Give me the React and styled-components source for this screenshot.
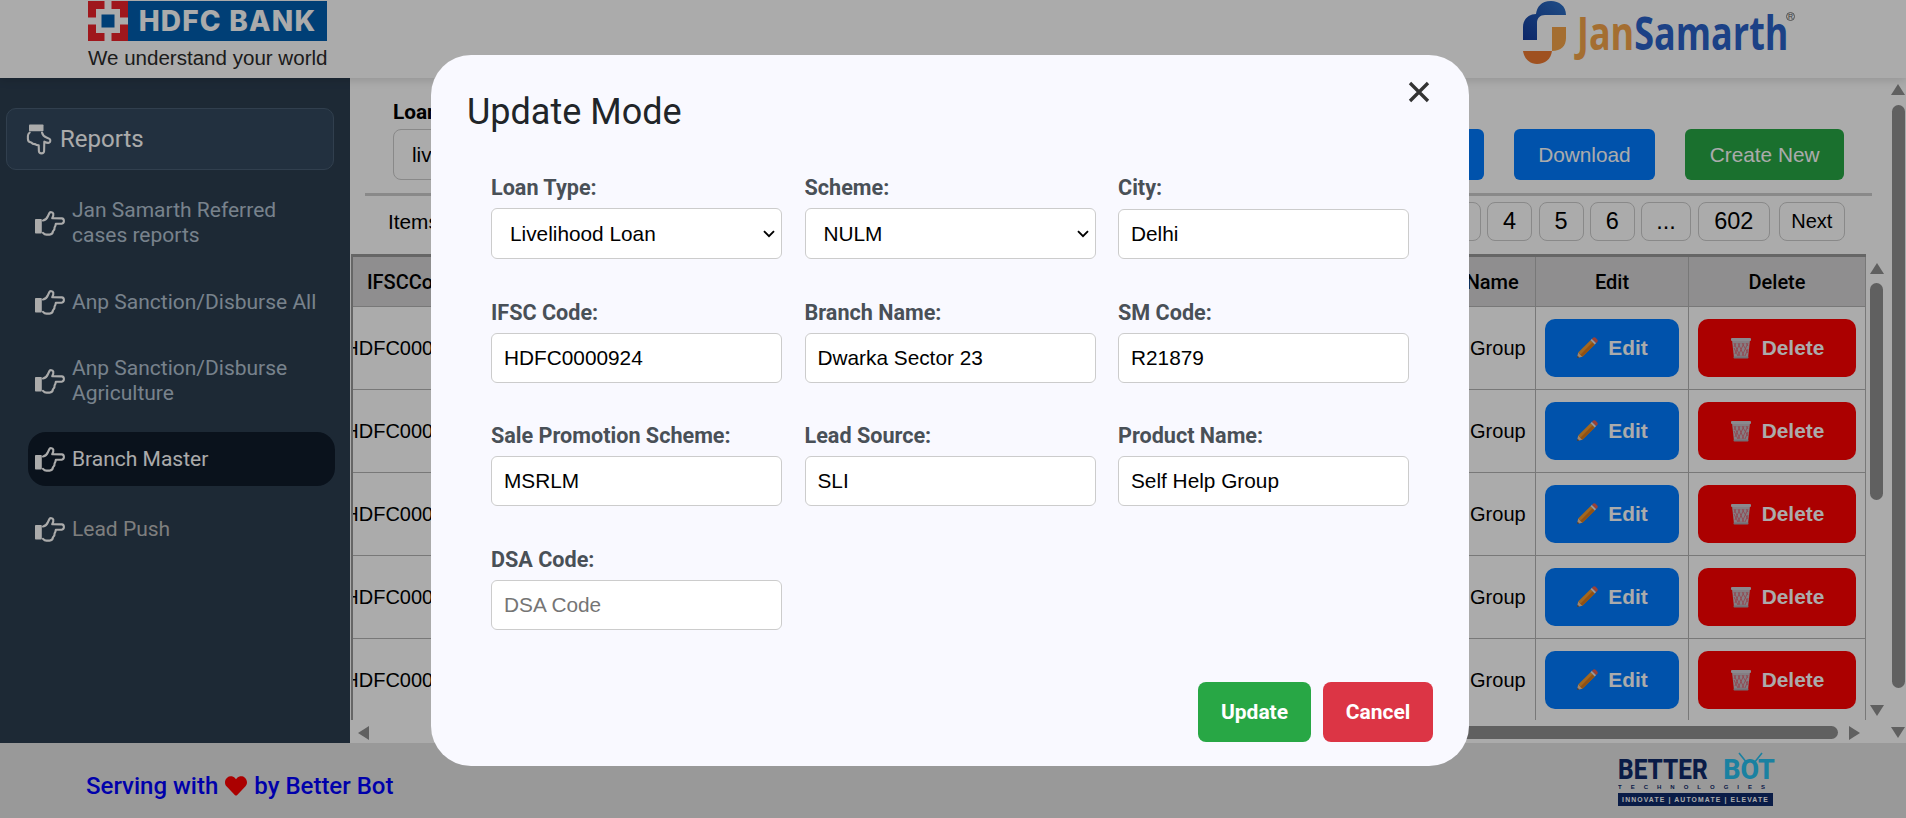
import React from "react";
import styled, { createGlobalStyle } from "styled-components";
import { FaHeart } from "react-icons/fa";

const Global = createGlobalStyle`
  html, body { margin: 0; padding: 0; height: 100%; overflow: hidden; background: #fff; }
  * { box-sizing: border-box; }
  body { font-family: Roboto, "Liberation Sans", sans-serif; }
`;
const Page = styled.div`height: 818px; display: flex; flex-direction: column; overflow: hidden;`;

const Header = styled.header`
  height: 78px; flex: none; background: #fff; display: flex; justify-content: space-between;
  padding: 1px 121px 0 88px; box-shadow: 0 3px 8px rgba(0,0,0,.12); position: relative; z-index: 1;
`;
const HdfcLogo = styled.div`width: 239px; display: flex; flex-direction: column;`;
const HdfcBand = styled.div`height: 40px; display: flex; background: #005fb0;`;
const HdfcMark = styled.svg`width: 40px; height: 40px; flex: none;`;
const HdfcName = styled.div`
  flex: 1; display: flex; align-items: center; justify-content: center; color: #fff;
  font: 800 28px Inter, "Liberation Sans", sans-serif; letter-spacing: 1.2px; white-space: nowrap;
`;
const HdfcTag = styled.div`
  font: 400 20.55px/24px "Liberation Sans", sans-serif; color: #2a2a2a; margin-top: 5px; white-space: nowrap;
`;
const JanLogo = styled.div`display: flex; align-items: flex-start; gap: 11px; position: relative;`;
const JanMark = styled.svg`width: 43px; height: 64px; flex: none;`;
const JanWord = styled.div`
  font: 700 47px/56px "Open Sans", sans-serif; white-space: nowrap; color: #2a62c8;
  transform: scaleX(.765); transform-origin: left top; width: 208px; margin-top: 3px;
`;
const JanOrange = styled.span`color: #f5a54a;`;
const Reg = styled.span`
  position: absolute; right: -10px; top: 11px; width: 9px; height: 9px; border: 1px solid #777;
  border-radius: 50%; font: 7px/7px "Liberation Sans", sans-serif; text-align: center; color: #555;
`;

const Body = styled.div`flex: 1; display: flex; min-height: 0;`;
const Sidebar = styled.aside`
  width: 350px; flex: none; background: #2c3e50; padding: 30px 15px 0 6px; display: flex; flex-direction: column;
`;
const ReportsBox = styled.div`
  height: 62px; display: flex; align-items: center; gap: 6px; padding-left: 17px; width: 328px;
  background: #33485e; border: 1px solid #4a5f75; border-radius: 10px; color: #fff; font-size: 24px;
`;
const NavList = styled.nav`display: flex; flex-direction: column; margin-top: 28px; padding-left: 22px;`;
const NavItem = styled.div`
  display: flex; align-items: center; gap: 7px; padding: 0 7px; width: 307px; font-size: 21px; line-height: 25px;
  height: ${(p) => p.$h}px; margin-bottom: ${(p) => p.$mb}px;
  color: ${(p) => (p.$active ? "#fff" : p.$muted ? "#bdbdbd" : "#b3c2d1")};
  background: ${(p) => (p.$active ? "#0f1b2a" : "transparent")};
  border-radius: 18px;
`;
const HandSvg = styled.svg`
  width: 30px; height: 25px; flex: none; color: #fff; overflow: visible;
  transform: ${(p) => (p.$down ? "rotate(90deg)" : "none")};
`;
const Hand = ({ down }) => (
  <HandSvg viewBox="0 0 30 25" $down={down}>
    <rect x="0" y="8" width="6.8" height="14.5" rx=".8" fill="currentColor" />
    <path
      d="M8 9.5 C10.5 9 12 7.5 13 5 L14.4 2 C15.2 .8 17.6 .8 18.3 2.6 C18.7 4 18 5.6 17.2 7.2 L26.8 7.4 C29.6 7.6 29.6 12.4 26.8 12.6 L20.8 12.8 C20.6 14.6 20.2 15.6 19.6 16.4 C19.8 18 19 19.4 18 20.2 C17.8 22.4 16.4 23.6 14.6 23.6 L11.5 23.6 C10.2 23.6 9 23 8 21.8"
      fill="none" stroke="currentColor" strokeWidth="2.1" strokeLinecap="round" strokeLinejoin="round"
    />
  </HandSvg>
);

const Main = styled.main`flex: 1; min-width: 0; display: flex; background: #fff;`;
const Content = styled.div`flex: 1; min-width: 0; display: flex; flex-direction: column;`;
const Toolbar = styled.div`
  display: flex; justify-content: space-between; align-items: flex-end; padding: 22px 46px 0 43px;
`;
const FilterGroup = styled.div`display: flex; flex-direction: column; gap: 5px;`;
const FilterLabel = styled.div`font: 700 20.8px/24px Roboto, sans-serif; color: #000;`;
const FilterInput = styled.div`
  width: 250px; height: 51px; border: 1px solid #ccc; border-radius: 8px; padding: 0 18px;
  display: flex; align-items: center; font: 400 20.8px "Liberation Sans", sans-serif;
`;
const ToolActions = styled.div`display: flex; gap: 30px;`;
const ToolButton = styled.button`
  height: 51px; padding: 0 24.5px; border: 0; border-radius: 6px; color: #fff; white-space: nowrap;
  font: 400 20.8px "Liberation Sans", sans-serif; background: ${(p) => (p.$green ? "#28a745" : "#007bff")};
`;
const Divider = styled.div`height: 3px; background: #ccc; margin: 13px 18px 0 15px;`;
const PagerRow = styled.div`
  display: flex; justify-content: space-between; align-items: center; padding: 6px 45px 0 38px; height: 45px;
`;
const PagerInfo = styled.div`font: 400 20.8px "Liberation Sans", sans-serif; color: #000;`;
const Pager = styled.div`display: flex; gap: 6.5px; align-items: center;`;
const PageBtn = styled.button`
  height: 39px; width: ${(p) => p.$w}px; background: transparent; border: 1px solid #ccc; border-radius: 8px;
  padding: 0; color: #000; margin-left: ${(p) => p.$ml || 0}px;
  font: 400 ${(p) => p.$fs || 23.5}px "Liberation Sans", sans-serif;
`;
const TableArea = styled.div`flex: 1; min-height: 0; display: flex; flex-direction: column; margin: 13px 3px 0 0;`;
const TableRow0 = styled.div`flex: 1; min-height: 0; display: flex;`;
const TableClip = styled.div`
  width: 1515px; flex: none; margin-left: 1px; overflow: hidden; border-left: 2px solid #999; border-top: 3px solid #999;
`;
const COLS = "117px 904px 162px 153px 177px";
const HeadRow = styled.div`
  display: grid; grid-template-columns: ${COLS}; height: 50px; background: #d6d4d5;
  border-bottom: 1px solid #b3b3b3;
`;
const HeadCell = styled.div`
  display: flex; align-items: center; justify-content: center; white-space: nowrap;
  border-right: 1px solid #b3b3b3; font: 500 20px Roboto, sans-serif; color: #000;
`;
const DataRow = styled.div`
  display: grid; grid-template-columns: ${COLS}; height: 83px; border-bottom: 1px solid #b3b3b3;
`;
const DataCell = styled.div`
  display: flex; align-items: center; justify-content: center; white-space: nowrap; min-width: 0;
  border-right: 1px solid #b3b3b3; font: 400 20px "Liberation Sans", sans-serif; color: #000;
`;
const ActionButton = styled.button`
  height: 58px; width: ${(p) => p.$w}px; flex: none; border: 0; border-radius: 10px; color: #fff;
  display: flex; align-items: center; justify-content: center; gap: 10px; padding: 0;
  font: 700 20.8px "Liberation Sans", sans-serif; background: ${(p) => (p.$red ? "#ff0000" : "#007bff")};
`;
const VBar = styled.div`
  flex: 1; display: flex; flex-direction: column; align-items: center; padding-top: ${(p) => p.$pt}px;
`;
const VThumb = styled.div`
  width: ${(p) => p.$w}px; height: ${(p) => p.$h}px; border-radius: 7px; background: #8f8f8f; margin-top: ${(p) => p.$mt}px; flex: none;
`;
const Arrow = styled.svg`width: 14px; height: 11px; fill: #8f8f8f; flex: none; margin-top: ${(p) => p.$mt || 0}px;`;
const HBar = styled.div`height: 23px; flex: none; display: flex; align-items: center; padding: 2px 0 0 8px;`;
const HThumb = styled.div`
  width: ${(p) => p.$w}px; height: 13px; border-radius: 7px; background: #8f8f8f; margin: 0 11px 0 auto;
`;
const HArrow = styled.svg`width: 11px; height: 14px; fill: #8f8f8f; flex: none;`;
const Corner = styled.div`width: 27px; flex: none;`;
const PageBar = styled.div`width: 16px; flex: none; display: flex; flex-direction: column; align-items: center; padding-top: 6px;`;

const Footer = styled.footer`
  height: 75px; flex: none; background: #e4e4e4; display: flex; justify-content: space-between; align-items: center;
  padding: 0 133px 0 86px;
`;
const Serving = styled.div`
  display: flex; align-items: center; gap: 7px; font: 500 24px Roboto, sans-serif; color: #0000ff; margin-top: 10px;
  svg { width: 22px; height: 22px; color: #ff0000; }
`;
const BotLogo = styled.div`width: 155px; display: flex; flex-direction: column; position: relative; margin-top: 2px;`;
const BotWord = styled.div`
  display: flex; justify-content: space-between; height: 26px; font: 800 28px/26px Roboto, sans-serif; color: #0f2a6b;
`;
const BotNavy = styled.span`transform: scaleX(.87); transform-origin: left center;`;
const BotTeal = styled.span`color: #27c0f0; transform: scaleX(.96); transform-origin: right center;`;
const Antenna = styled.svg`position: absolute; right: 9px; top: -5px; width: 28px; height: 12px;`;
const BotTech = styled.div`
  font: 700 6px/8px "Liberation Sans", sans-serif; letter-spacing: 9px; color: #0f2a6b; white-space: nowrap; overflow: hidden;
`;
const BotBand = styled.div`
  margin-top: 2px; height: 13px; background: #0f2a6b; color: #fff; display: flex; align-items: center; justify-content: center;
  font: 700 6.8px "Liberation Sans", sans-serif; letter-spacing: 1.15px; white-space: nowrap;
`;

const Overlay = styled.div`
  position: fixed; inset: 0; background: rgba(0,0,0,.33); z-index: 5; display: flex; align-items: flex-start;
  justify-content: center; padding: 55px 6px 0 0;
`;
const Modal = styled.div`
  position: relative; width: 1038px; height: 711px; background: #f9f9ff; border-radius: 40px;
  display: flex; flex-direction: column; padding: 0 36px 24px 36px;
`;
const Title = styled.h2`margin: 34px 0 0; font: 400 36px/46px Roboto, sans-serif; color: #212529;`;
const CloseBtn = styled.button`
  position: absolute; top: 25px; right: 38px; width: 24px; height: 24px; border: 0; padding: 0; background: none;
  svg { display: block; width: 24px; height: 24px; }
`;
const Form = styled.div`
  display: grid; grid-template-columns: repeat(3, 291px); column-gap: 22.5px; row-gap: 42.5px; margin: 42px 0 0 24px;
`;
const Field = styled.label`display: flex; flex-direction: column; justify-content: space-between; gap: 10px;`;
const FieldName = styled.span`font: 700 21.6px/21px Roboto, sans-serif; color: #495057; white-space: nowrap;`;
const Control = styled.input`
  height: 50px; width: 100%; border: 1px solid #ccc; border-radius: 6px; background: #fff; padding: 0 12px;
  font: 400 20.8px "Liberation Sans", sans-serif; color: #000; outline: none;
`;
const Select = styled.select`
  height: 51px; width: 100%; border: 1px solid #ccc; border-radius: 6px; padding: 0 30px 0 18px; appearance: none;
  background: #fff url("data:image/svg+xml,%3Csvg xmlns='http://www.w3.org/2000/svg' width='12' height='8' viewBox='0 0 12 8'%3E%3Cpath d='M1 1.2 L6 6.2 L11 1.2' fill='none' stroke='%23000' stroke-width='1.9'/%3E%3C/svg%3E") no-repeat right 6px center;
  font: 400 20.8px "Liberation Sans", sans-serif; color: #000; outline: none;
`;
const ModalActions = styled.div`margin-top: auto; display: flex; justify-content: flex-end; gap: 12px;`;
const ModalBtn = styled.button`
  height: 60px; width: ${(p) => p.$w}px; border: 0; border-radius: 8px; color: #fff; padding: 0;
  font: 700 21px Roboto, sans-serif; background: ${(p) => p.$bg};
`;

const Pencil = () => (
  <svg width="22" height="22" viewBox="0 0 22 22">
    <polygon points="1,21 2.2,15.6 6.4,19.8" fill="#f6c79a" />
    <polygon points="1,21 1.5,18.7 3.3,20.5" fill="#4a4a55" />
    <polygon points="2.2,15.6 14.5,3.2 18.8,7.5 6.4,19.8" fill="#f39a2e" />
    <polygon points="4.3,17.7 16.6,5.3 18.8,7.5 6.4,19.8" fill="#d97a1e" />
    <polygon points="14.5,3.2 15.9,1.8 20.2,6.1 18.8,7.5" fill="#e8e4e0" />
    <path d="M15.9 1.8 L17.2 .7 C18 .1 18.8 .1 19.6 .8 L21.2 2.4 C21.9 3.2 21.9 4 21.3 4.9 L20.2 6.1 Z" fill="#e9604f" />
  </svg>
);
const Basket = () => (
  <svg width="22" height="22" viewBox="0 0 22 22">
    <polygon points="2,3 20,3 18,21 4,21" fill="#c6bcc4" />
    <g stroke="#e05060" strokeWidth=".9" opacity=".75">
      <path d="M4 6 L10 19 M8 6 L14 19 M12 6 L18 16 M16 6 L18 9 M4 11 L8 19 M18 6 L12 19 M14 6 L8 19 M10 6 L5 17 M6 6 L4 10 M18 12 L15 19" />
    </g>
    <rect x="1" y="1" width="20" height="3" rx="1" fill="#d0ccd4" />
    <rect x="3.5" y="19.4" width="15" height="2" rx="1" fill="#aaa4ae" />
  </svg>
);

const rows = [0, 1, 2, 3, 4];

const Field1 = ({ name, value, placeholder }) => (
  <Field>
    <FieldName>{name}</FieldName>
    <Control defaultValue={value} placeholder={placeholder} />
  </Field>
);
const Sel = ({ name, value }) => (
  <Field>
    <FieldName>{name}</FieldName>
    <Select defaultValue={value}><option>{value}</option></Select>
  </Field>
);

export default function App() {
  return (
    <Page>
      <Global />
      <Header>
        <HdfcLogo>
          <HdfcBand>
            <HdfcMark viewBox="0 0 40 40">
              <rect width="40" height="40" fill="#ed232a" />
              <rect x="8" y="8" width="24" height="24" fill="#fff" />
              <rect x="16.5" width="7" height="40" fill="#fff" />
              <rect y="16.5" width="40" height="7" fill="#fff" />
              <rect x="13.5" y="13.5" width="13" height="13" fill="#005fb0" />
            </HdfcMark>
            <HdfcName>HDFC BANK</HdfcName>
          </HdfcBand>
          <HdfcTag>We understand your world</HdfcTag>
        </HdfcLogo>
        <JanLogo>
          <JanMark viewBox="0 0 43 64">
            <defs>
              <linearGradient id="janBlue" x1="0" y1="1" x2="1" y2="0">
                <stop offset="0" stopColor="#123a9c" /><stop offset="1" stopColor="#2f74c8" />
              </linearGradient>
            </defs>
            <path d="M43 14 C43 5 36 0 28 0 C18 0 14 6 13 13 C6 13 0 18 0 26 L0 39 L14 39 L14 22 C14 17 17 14 22 14 Z" fill="url(#janBlue)" />
            <path d="M29 26 H43 V37 C43 45 38 50 29 50 Z" fill="#f5a54a" />
            <path d="M0 50 L29 50 C28 58 22 63 14 63 C6 63 1 57 0 50 Z" fill="#ee7a30" />
          </JanMark>
          <JanWord><JanOrange>Jan</JanOrange>Samarth</JanWord>
          <Reg>R</Reg>
        </JanLogo>
      </Header>
      <Body>
        <Sidebar>
          <ReportsBox><Hand down />Reports</ReportsBox>
          <NavList>
            <NavItem $h={50} $mb={42}><Hand /><span>Jan Samarth Referred<br />cases reports</span></NavItem>
            <NavItem $h={25} $mb={41}><Hand /><span>Anp Sanction/Disburse All</span></NavItem>
            <NavItem $h={50} $mb={26}><Hand /><span>Anp Sanction/Disburse<br />Agriculture</span></NavItem>
            <NavItem $h={54} $mb={16} $active><Hand /><span>Branch Master</span></NavItem>
            <NavItem $h={54} $mb={0} $muted><Hand /><span>Lead Push</span></NavItem>
          </NavList>
        </Sidebar>
        <Main>
          <Content>
            <Toolbar>
              <FilterGroup>
                <FilterLabel>Loan Type</FilterLabel>
                <FilterInput>livelihood</FilterInput>
              </FilterGroup>
              <ToolActions>
                <ToolButton>Search</ToolButton>
                <ToolButton>Download</ToolButton>
                <ToolButton $green>Create New</ToolButton>
              </ToolActions>
            </Toolbar>
            <Divider />
            <PagerRow>
              <PagerInfo>Items per page</PagerInfo>
              <Pager>
                <PageBtn $w={45}>3</PageBtn>
                <PageBtn $w={45}>4</PageBtn>
                <PageBtn $w={45}>5</PageBtn>
                <PageBtn $w={44.5}>6</PageBtn>
                <PageBtn $w={50}>...</PageBtn>
                <PageBtn $w={72.5}>602</PageBtn>
                <PageBtn $w={66.5} $fs={20} $ml={2}>Next</PageBtn>
              </Pager>
            </PagerRow>
            <TableArea>
              <TableRow0>
                <TableClip>
                  <HeadRow>
                    <HeadCell>IFSCCode</HeadCell>
                    <HeadCell />
                    <HeadCell>Product Name</HeadCell>
                    <HeadCell>Edit</HeadCell>
                    <HeadCell>Delete</HeadCell>
                  </HeadRow>
                  {rows.map((r) => (
                    <DataRow key={r}>
                      <DataCell>HDFC0000924</DataCell>
                      <DataCell />
                      <DataCell>Self Help Group</DataCell>
                      <DataCell><ActionButton $w={134}><Pencil />Edit</ActionButton></DataCell>
                      <DataCell><ActionButton $w={158} $red><Basket />Delete</ActionButton></DataCell>
                    </DataRow>
                  ))}
                </TableClip>
                <VBar $pt={9}>
                  <Arrow viewBox="0 0 14 11"><polygon points="7,0 14,11 0,11" /></Arrow>
                  <VThumb $w={13} $h={217} $mt={9} />
                  <Arrow viewBox="0 0 14 11" $mt={205}><polygon points="0,0 14,0 7,11" /></Arrow>
                </VBar>
              </TableRow0>
              <HBar>
                <HArrow viewBox="0 0 11 14"><polygon points="11,0 11,14 0,7" /></HArrow>
                <HThumb $w={1300} />
                <HArrow viewBox="0 0 11 14"><polygon points="0,0 11,7 0,14" /></HArrow>
                <Corner />
              </HBar>
            </TableArea>
          </Content>
          <PageBar>
            <Arrow viewBox="0 0 14 11"><polygon points="7,0 14,11 0,11" /></Arrow>
            <VThumb $w={13} $h={583} $mt={10} />
            <Arrow viewBox="0 0 14 11" $mt={39}><polygon points="0,0 14,0 7,11" /></Arrow>
          </PageBar>
        </Main>
      </Body>
      <Footer>
        <Serving>Serving with <FaHeart /> by Better Bot</Serving>
        <BotLogo>
          <BotWord><BotNavy>BETTER</BotNavy><BotTeal>BOT</BotTeal></BotWord>
          <Antenna viewBox="0 0 28 12"><path d="M3 1 L11 11 M26 1 L18 11" stroke="#27c0f0" strokeWidth="1.6" fill="none" /></Antenna>
          <BotTech>TECHNOLOGIES</BotTech>
          <BotBand>INNOVATE | AUTOMATE | ELEVATE</BotBand>
        </BotLogo>
      </Footer>
      <Overlay>
        <Modal>
          <Title>Update Mode</Title>
          <CloseBtn aria-label="Close">
            <svg viewBox="0 0 24 24"><path d="M3 3 L21 21 M21 3 L3 21" stroke="#333" strokeWidth="3.3" fill="none" /></svg>
          </CloseBtn>
          <Form>
            <Sel name="Loan Type:" value="Livelihood Loan" />
            <Sel name="Scheme:" value="NULM" />
            <Field1 name="City:" value="Delhi" />
            <Field1 name="IFSC Code:" value="HDFC0000924" />
            <Field1 name="Branch Name:" value="Dwarka Sector 23" />
            <Field1 name="SM Code:" value="R21879" />
            <Field1 name="Sale Promotion Scheme:" value="MSRLM" />
            <Field1 name="Lead Source:" value="SLI" />
            <Field1 name="Product Name:" value="Self Help Group" />
            <Field1 name="DSA Code:" placeholder="DSA Code" />
          </Form>
          <ModalActions>
            <ModalBtn $w={113} $bg="#28a745">Update</ModalBtn>
            <ModalBtn $w={110} $bg="#dc3545">Cancel</ModalBtn>
          </ModalActions>
        </Modal>
      </Overlay>
    </Page>
  );
}
